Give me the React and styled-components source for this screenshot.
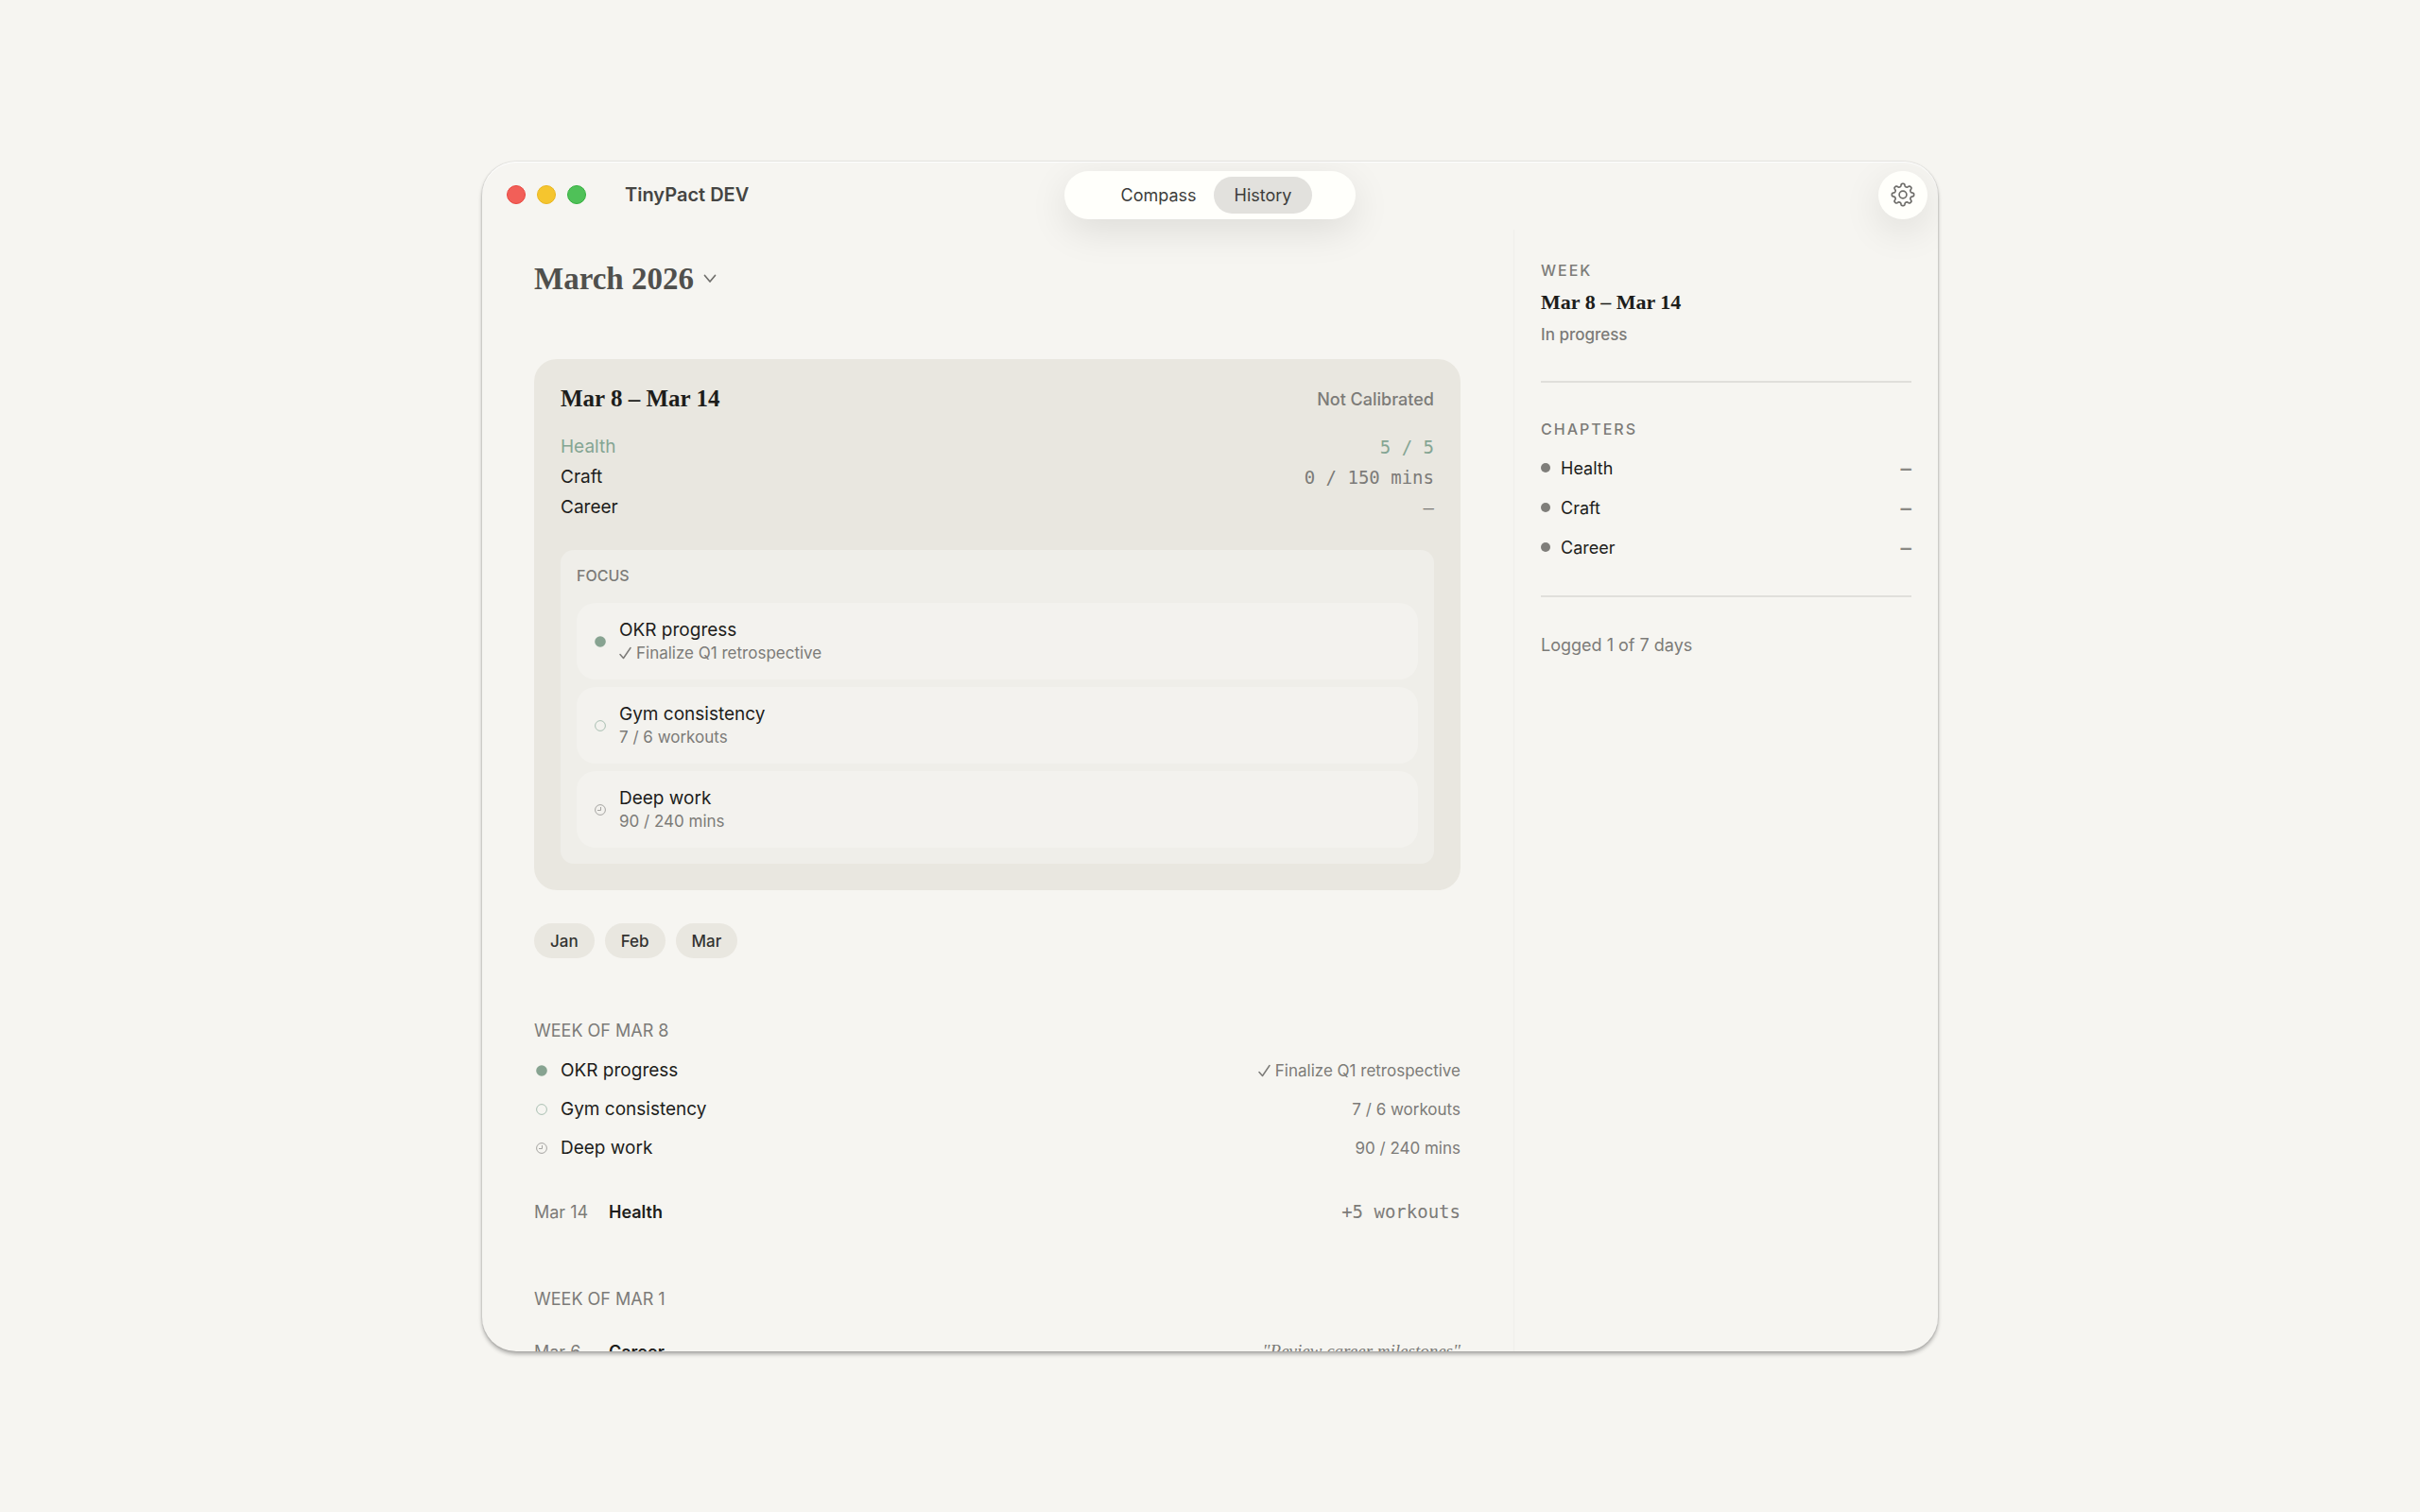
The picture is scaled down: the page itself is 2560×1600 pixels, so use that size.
import React, { useState } from "react";
import styled, { createGlobalStyle } from "styled-components";

const SANS = `Inter, "Liberation Sans", sans-serif`;
const SERIF = `"Liberation Serif", serif`;
const MONO = `"DejaVu Sans Mono", "Liberation Mono", monospace`;

const GlobalStyle = createGlobalStyle`
  * {
    box-sizing: border-box;
  }
  body {
    margin: 0;
    background: #f6f5f1;
    font-family: ${SANS};
    font-size: 18px;
    color: #1d1d1b;
    -webkit-font-smoothing: antialiased;
  }
  h1, h2, h3, p, ul, dl, dd {
    margin: 0;
    padding: 0;
    font-weight: 400;
  }
  ul {
    list-style: none;
  }
  button {
    border: none;
    padding: 0;
    background: none;
    font-family: inherit;
    color: inherit;
    cursor: pointer;
  }
`;

const Page = styled.div`
  display: flex;
  height: 100vh;
  padding: 171px 510px 170px;
`;

const Window = styled.div`
  flex: 1;
  display: flex;
  flex-direction: column;
  overflow: hidden;
  border-radius: 36px;
  background: #f6f5f1;
  box-shadow: 0 0 2px rgba(0, 0, 0, 0.2), 0 3px 4px rgba(0, 0, 0, 0.3),
    inset 0 1px 1px #ffffff;
`;

const TitleBar = styled.header`
  display: grid;
  grid-template-columns: 1fr auto 1fr;
  align-items: center;
  height: 72px;
  padding: 0 11px 2px;
`;

const TitleGroup = styled.div`
  display: flex;
  align-items: center;
  gap: 12px;
  margin-left: 15px;
`;

const WindowButton = styled.button`
  width: 20px;
  height: 20px;
  border-radius: 50%;
  border: 1px solid ${(props) => props.$edge};
  background: ${(props) => props.$fill};
`;

const AppTitle = styled.h1`
  margin-left: 29px;
  font-size: 20px;
  font-weight: 600;
  color: #454543;
`;

const Tabs = styled.nav`
  display: flex;
  align-items: center;
  justify-content: center;
  width: 308px;
  height: 51px;
  padding-right: 4px;
  border-radius: 26px;
  background: #fffffb;
  box-shadow: 0 12px 40px rgba(0, 0, 0, 0.1);
`;

const Tab = styled.button`
  height: 39px;
  padding: 0 ${(props) => (props.$active ? "22px" : "18px")};
  border-radius: 20px;
  font-size: 18px;
  color: #3d3d3b;
  background: ${(props) => (props.$active ? "#e2e1dd" : "transparent")};
`;

const SettingsButton = styled.button`
  display: flex;
  align-items: center;
  justify-content: center;
  justify-self: end;
  width: 52px;
  height: 51px;
  border-radius: 26px;
  background: #fffffb;
  color: #6f6e6b;
  box-shadow: 0 12px 40px rgba(0, 0, 0, 0.1);
`;

const Body = styled.div`
  flex: 1;
  display: flex;
  min-height: 0;
`;

const Main = styled.main`
  flex: 1;
  padding: 30px 56px 0 55px;
  overflow: hidden;
`;

const Sidebar = styled.aside`
  width: 449px;
  padding: 33px 28px 0;
  border-left: 1px solid #f0efeb;
`;

const MonthButton = styled.button`
  display: flex;
  align-items: center;
  gap: 10px;
  height: 44px;
  font-family: ${SERIF};
  font-size: 33px;
  font-weight: 700;
  color: #50504d;
`;

const WeekCard = styled.section`
  margin-top: 63px;
  padding: 28px;
  border-radius: 24px;
  background: #e9e7e0;
`;

const CardHeader = styled.div`
  display: flex;
  align-items: center;
  justify-content: space-between;
  height: 28px;
  margin-bottom: 21px;
`;

const CardTitle = styled.h2`
  font-family: ${SERIF};
  font-size: 25px;
  font-weight: 700;
`;

const CardStatus = styled.p`
  font-size: 18px;
  font-weight: 500;
  color: #7c7b78;
`;

const TotalRow = styled.div`
  display: flex;
  justify-content: space-between;
  font-size: 19px;
  line-height: 32px;
  color: ${(props) => (props.$done ? "#84a593" : "inherit")};
`;

const TotalValue = styled.dd`
  font-family: ${MONO};
  font-size: 19px;
  color: ${(props) => (props.$done ? "#84a593" : "#7c7b78")};
`;

const FocusPanel = styled.div`
  margin-top: 29px;
  padding: 17px;
  border-radius: 14px;
  background: #efeee9;
`;

const FocusLabel = styled.h3`
  margin-bottom: 19px;
  font-size: 16px;
  font-weight: 500;
  line-height: 20px;
  color: #7c7b78;
`;

const FocusList = styled.ul`
  display: flex;
  flex-direction: column;
  gap: 8px;
`;

const FocusItem = styled.li`
  display: flex;
  align-items: center;
  gap: 14px;
  height: 81px;
  padding: 0 19px;
  border-radius: 20px;
  background: #f3f2ee;
`;

const FocusName = styled.p`
  font-size: 19px;
  line-height: 24px;
`;

const Detail = styled.p`
  display: flex;
  align-items: center;
  gap: 5px;
  font-size: 17px;
  line-height: 24px;
  color: #7c7b78;
`;

const MonthChips = styled.div`
  display: flex;
  gap: 11px;
  margin-top: 35px;
`;

const Chip = styled.button`
  height: 37px;
  padding: 0 17px;
  border-radius: 19px;
  background: #e9e7e0;
  font-size: 17px;
  font-weight: 500;
  color: #333331;
`;

const WeekSection = styled.section`
  margin-top: 65px;
`;

const WeekHeading = styled.h3`
  font-size: 18px;
  line-height: 24px;
  color: #7c7b78;
`;

const GoalList = styled.ul`
  margin-top: 9px;
`;

const GoalRow = styled.li`
  display: flex;
  align-items: center;
  gap: 14px;
  height: 41px;
  padding-left: 2px;
`;

const GoalName = styled.p`
  flex: 1;
  font-size: 19px;
`;

const EntryRow = styled.div`
  display: flex;
  align-items: center;
  height: 32px;
  margin-top: ${(props) => (props.$afterGoals ? "31px" : "27px")};
  font-size: 18px;
`;

const EntryDate = styled.time`
  width: 79px;
  color: #7c7b78;
`;

const EntryChapter = styled.p`
  flex: 1;
  font-weight: 600;
`;

const EntryAmount = styled.p`
  font-family: ${MONO};
  font-size: 19px;
  color: #7c7b78;
`;

const EntryNote = styled.p`
  font-family: ${SERIF};
  font-size: 19px;
  font-style: italic;
  color: #7c7b78;
`;

const SideLabel = styled.h3`
  font-size: 16px;
  font-weight: 500;
  line-height: 20px;
  letter-spacing: 2px;
  color: #7c7b78;
`;

const SideTitle = styled.h2`
  margin-top: 8px;
  font-family: ${SERIF};
  font-size: 22px;
  font-weight: 700;
  line-height: 32px;
`;

const SideStatus = styled.p`
  margin-top: 6px;
  font-size: 17px;
  font-weight: 500;
  line-height: 24px;
  color: #7c7b78;
`;

const Divider = styled.hr`
  height: 2px;
  margin: 37px 0 39px;
  border: none;
  background: #e0dfdb;
`;

const ChapterList = styled.ul`
  margin-top: 10px;
  margin-bottom: -7px;
`;

const ChapterRow = styled.li`
  display: flex;
  align-items: center;
  height: 42px;
  font-size: 18px;
`;

const ChapterDot = styled.span`
  width: 10px;
  height: 10px;
  margin-right: 11px;
  border-radius: 50%;
  background: #7f7e7a;
`;

const ChapterName = styled.span`
  flex: 1;
`;

const ChapterValue = styled.span`
  font-family: ${MONO};
  font-size: 19px;
  font-weight: 700;
  color: #8a8985;
`;

const SideNote = styled.p`
  font-size: 18px;
  line-height: 24px;
  color: #7c7b78;
`;

// eight rounded teeth around a 26px box
const gearPath = Array.from({ length: 144 }, (_, i) => {
  const angle = (i / 144) * Math.PI * 2;
  const radius = 10.2 + 1.5 * Math.tanh(2 * Math.cos(8 * angle));
  const x = 13 + radius * Math.sin(angle);
  const y = 13 - radius * Math.cos(angle);
  return `${i === 0 ? "M" : "L"}${x.toFixed(2)} ${y.toFixed(2)}`;
}).join("") + "Z";

function GearIcon() {
  return (
    <svg width="26" height="26" viewBox="0 0 26 26" fill="none" stroke="currentColor" strokeWidth="1.7" strokeLinejoin="round">
      <path d={gearPath} />
      <circle cx="13" cy="13" r="3.9" />
    </svg>
  );
}

function ChevronDown() {
  return (
    <svg width="14" height="10" viewBox="0 0 14 10" fill="none" stroke="#6f6e6b" strokeWidth="1.7" strokeLinecap="round" strokeLinejoin="round">
      <path d="M1.5 1.5 7 8l5.5-6.5" />
    </svg>
  );
}

function CheckMark() {
  return (
    <svg width="13" height="14" viewBox="0 0 13 14" fill="none" stroke="currentColor" strokeWidth="1.5" strokeLinecap="round" strokeLinejoin="round">
      <path d="M1 8.5 4.5 12.5 12 1.5" />
    </svg>
  );
}

function StatusIcon({ status }) {
  return (
    <svg width="12" height="12" viewBox="0 0 12 12" fill="none">
      {status === "done" && <circle cx="6" cy="6" r="5.8" fill="#87a391" />}
      {status === "open" && <circle cx="6" cy="6" r="5.4" stroke="#a9bfb2" />}
      {status === "timed" && (
        <g stroke="#a5a4a1">
          <circle cx="6" cy="6" r="5.4" />
          <path d="M6.5 3v3.5H3" />
        </g>
      )}
    </svg>
  );
}

const goals = [
  { name: "OKR progress", detail: "Finalize Q1 retrospective", status: "done", checked: true },
  { name: "Gym consistency", detail: "7 / 6 workouts", status: "open" },
  { name: "Deep work", detail: "90 / 240 mins", status: "timed" },
];

const totals = [
  { name: "Health", value: "5 / 5", done: true },
  { name: "Craft", value: "0 / 150 mins" },
  { name: "Career", value: "–" },
];

const months = ["Jan", "Feb", "Mar"];
const chapters = ["Health", "Craft", "Career"];

function GoalDetail({ goal }) {
  return (
    <Detail>
      {goal.checked && <CheckMark />}
      {goal.detail}
    </Detail>
  );
}

function App() {
  const [tab, setTab] = useState("History");

  return (
    <>
      <GlobalStyle />
      <Page>
        <Window>
          <TitleBar>
            <TitleGroup>
              <WindowButton aria-label="Close" $fill="#f25f58" $edge="#e8463f" />
              <WindowButton aria-label="Minimize" $fill="#f5c52e" $edge="#e8b51f" />
              <WindowButton aria-label="Zoom" $fill="#4fc158" $edge="#35b03f" />
              <AppTitle>TinyPact DEV</AppTitle>
            </TitleGroup>
            <Tabs>
              {["Compass", "History"].map((name) => (
                <Tab key={name} $active={tab === name} onClick={() => setTab(name)}>
                  {name}
                </Tab>
              ))}
            </Tabs>
            <SettingsButton aria-label="Settings">
              <GearIcon />
            </SettingsButton>
          </TitleBar>
          <Body>
            <Main>
              <MonthButton>
                March 2026
                <ChevronDown />
              </MonthButton>
              <WeekCard>
                <CardHeader>
                  <CardTitle>Mar 8 – Mar 14</CardTitle>
                  <CardStatus>Not Calibrated</CardStatus>
                </CardHeader>
                <dl>
                  {totals.map((total) => (
                    <TotalRow key={total.name} $done={total.done}>
                      <dt>{total.name}</dt>
                      <TotalValue $done={total.done}>{total.value}</TotalValue>
                    </TotalRow>
                  ))}
                </dl>
                <FocusPanel>
                  <FocusLabel>FOCUS</FocusLabel>
                  <FocusList>
                    {goals.map((goal) => (
                      <FocusItem key={goal.name}>
                        <StatusIcon status={goal.status} />
                        <div>
                          <FocusName>{goal.name}</FocusName>
                          <GoalDetail goal={goal} />
                        </div>
                      </FocusItem>
                    ))}
                  </FocusList>
                </FocusPanel>
              </WeekCard>
              <MonthChips>
                {months.map((month) => (
                  <Chip key={month}>{month}</Chip>
                ))}
              </MonthChips>
              <WeekSection>
                <WeekHeading>WEEK OF MAR 8</WeekHeading>
                <GoalList>
                  {goals.map((goal) => (
                    <GoalRow key={goal.name}>
                      <StatusIcon status={goal.status} />
                      <GoalName>{goal.name}</GoalName>
                      <GoalDetail goal={goal} />
                    </GoalRow>
                  ))}
                </GoalList>
                <EntryRow $afterGoals>
                  <EntryDate>Mar 14</EntryDate>
                  <EntryChapter>Health</EntryChapter>
                  <EntryAmount>+5 workouts</EntryAmount>
                </EntryRow>
              </WeekSection>
              <WeekSection>
                <WeekHeading>WEEK OF MAR 1</WeekHeading>
                <EntryRow>
                  <EntryDate>Mar 6</EntryDate>
                  <EntryChapter>Career</EntryChapter>
                  <EntryNote>"Review career milestones"</EntryNote>
                </EntryRow>
              </WeekSection>
            </Main>
            <Sidebar>
              <SideLabel>WEEK</SideLabel>
              <SideTitle>Mar 8 – Mar 14</SideTitle>
              <SideStatus>In progress</SideStatus>
              <Divider />
              <SideLabel>CHAPTERS</SideLabel>
              <ChapterList>
                {chapters.map((chapter) => (
                  <ChapterRow key={chapter}>
                    <ChapterDot />
                    <ChapterName>{chapter}</ChapterName>
                    <ChapterValue>–</ChapterValue>
                  </ChapterRow>
                ))}
              </ChapterList>
              <Divider />
              <SideNote>Logged 1 of 7 days</SideNote>
            </Sidebar>
          </Body>
        </Window>
      </Page>
    </>
  );
}

export default App;
